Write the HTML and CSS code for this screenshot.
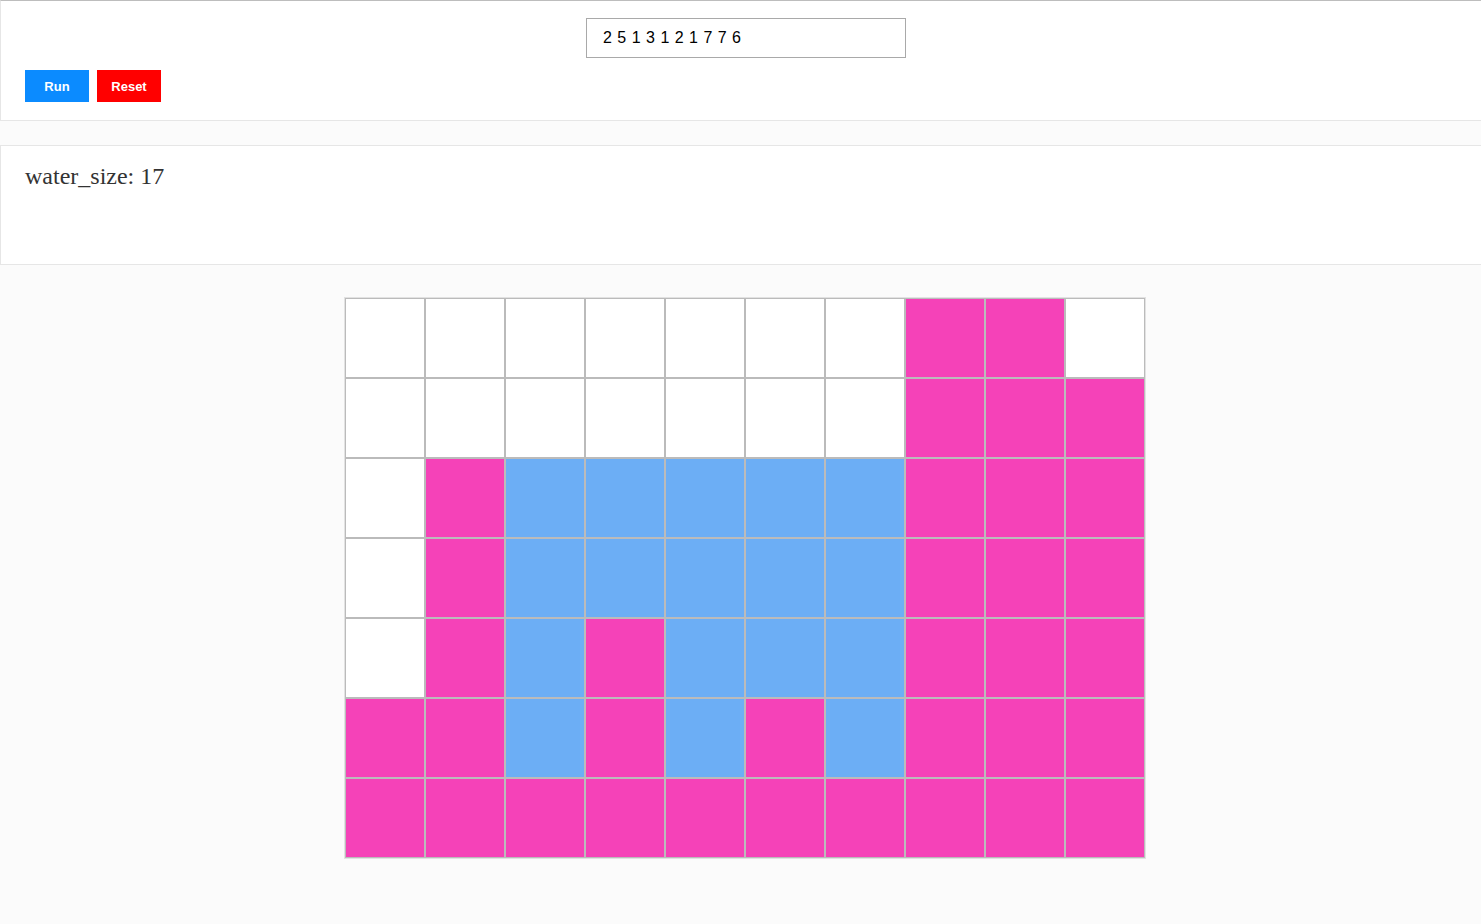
FILE: index.html
```html
<!DOCTYPE html>
<html>
<head>
<meta charset="utf-8">
<link rel="stylesheet" href="styles.css">
</head>
<body>
<div class="panel controls">
  <div class="input-row">
    <input class="heights" type="text" value="2 5 1 3 1 2 1 7 7 6">
  </div>
  <div class="buttons">
    <button class="btn run">Run</button>
    <button class="btn reset">Reset</button>
  </div>
</div>
<div class="panel result">
  <div class="result-text">water_size: 17</div>
</div>
<div class="grid-wrap">
  <div class="grid">
    <div class="c w"></div><div class="c w"></div><div class="c w"></div><div class="c w"></div><div class="c w"></div><div class="c w"></div><div class="c w"></div><div class="c p"></div><div class="c p"></div><div class="c w"></div>
    <div class="c w"></div><div class="c w"></div><div class="c w"></div><div class="c w"></div><div class="c w"></div><div class="c w"></div><div class="c w"></div><div class="c p"></div><div class="c p"></div><div class="c p"></div>
    <div class="c w"></div><div class="c p"></div><div class="c b"></div><div class="c b"></div><div class="c b"></div><div class="c b"></div><div class="c b"></div><div class="c p"></div><div class="c p"></div><div class="c p"></div>
    <div class="c w"></div><div class="c p"></div><div class="c b"></div><div class="c b"></div><div class="c b"></div><div class="c b"></div><div class="c b"></div><div class="c p"></div><div class="c p"></div><div class="c p"></div>
    <div class="c w"></div><div class="c p"></div><div class="c b"></div><div class="c p"></div><div class="c b"></div><div class="c b"></div><div class="c b"></div><div class="c p"></div><div class="c p"></div><div class="c p"></div>
    <div class="c p"></div><div class="c p"></div><div class="c b"></div><div class="c p"></div><div class="c b"></div><div class="c p"></div><div class="c b"></div><div class="c p"></div><div class="c p"></div><div class="c p"></div>
    <div class="c p"></div><div class="c p"></div><div class="c p"></div><div class="c p"></div><div class="c p"></div><div class="c p"></div><div class="c p"></div><div class="c p"></div><div class="c p"></div><div class="c p"></div>
  </div>
</div>
</body>
</html>
```
FILE: styles.css
```css
html, body {
  margin: 0;
  padding: 0;
  background: #fbfbfb;
}
body {
  font-family: "Liberation Sans", Arial, sans-serif;
  min-height: 924px;
}
.panel {
  background: #ffffff;
  border: 1px solid #e6e6e6;
  border-right: 0;
}
.controls {
  border-top-color: #bdbdbd;
  padding: 17px 24px 18px 24px;
}
.input-row {
  display: flex;
  justify-content: center;
  padding-left: 10px;
  margin: 0 -24px;
}
.heights {
  box-sizing: border-box;
  width: 320px;
  height: 40px;
  border: 1px solid #a9a9a9;
  border-radius: 0;
  padding: 0 16px;
  font-family: "Liberation Sans", Arial, sans-serif;
  font-size: 16px;
  letter-spacing: 0.5px;
  color: #000;
  outline: none;
  background: #fff;
}
.buttons {
  display: flex;
  gap: 8px;
  margin-top: 12px;
}
.btn {
  width: 64px;
  height: 32px;
  border: 0;
  border-radius: 0;
  color: #fff;
  font-family: "Liberation Sans", Arial, sans-serif;
  font-size: 13px;
  font-weight: bold;
  padding: 0;
  cursor: pointer;
}
.run { background: #0b8bff; }
.reset { background: #ff0000; }
.result {
  margin-top: 24px;
  height: 118px;
  box-sizing: content-box;
  padding: 0 24px;
}
.result-text {
  font-family: "Liberation Serif", "Times New Roman", serif;
  font-size: 24px;
  color: #333;
  padding-top: 17px;
}
.grid-wrap {
  display: flex;
  justify-content: center;
  padding-left: 8px;
  margin-top: 32px;
}
.grid {
  display: grid;
  grid-template-columns: repeat(10, 80px);
  grid-auto-rows: 80px;
  border: 1px solid #e2e2e2;
}
.c {
  box-sizing: border-box;
  border: 1px solid #bbbbbb;
}
.w { background: #ffffff; }
.p { background: #f542b8; }
.b { background: #6caef5; }
```
